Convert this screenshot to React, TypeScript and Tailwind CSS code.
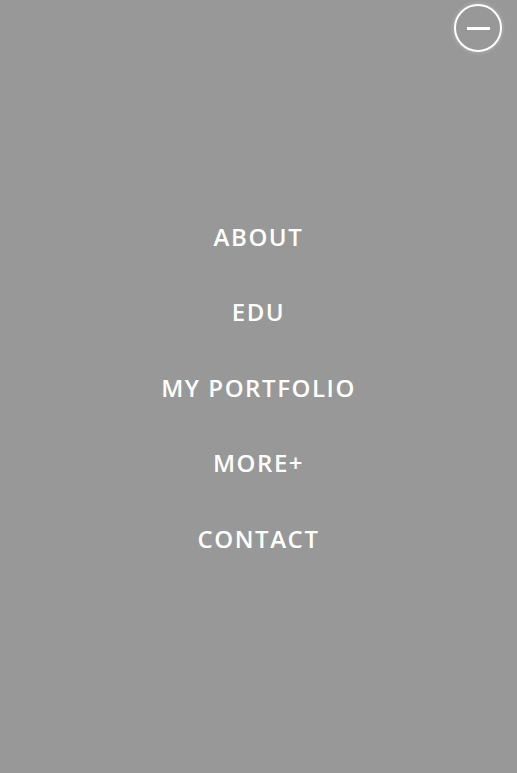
const links = ["ABOUT", "EDU", "MY PORTFOLIO", "MORE+", "CONTACT"];

export default function App() {
  return (
    <div className="relative h-screen w-full bg-[#989898] font-['Open_Sans',sans-serif]">
      <button className="absolute right-[15px] top-[4px] flex h-[48px] w-[48px] items-center justify-center rounded-full border-2 border-white shadow-[0_0_4px_rgba(255,255,255,0.35)]">
        <span className="block h-[3px] w-[23px] bg-white" />
      </button>
      <nav className="flex h-full items-center justify-center pt-[2px]">
        <ul className="flex flex-col items-center">
          {links.map((l) => (
            <li key={l} className="text-[24px] font-semibold leading-[75.5px] tracking-[0.065em] text-white">
              {l}
            </li>
          ))}
        </ul>
      </nav>
    </div>
  );
}
